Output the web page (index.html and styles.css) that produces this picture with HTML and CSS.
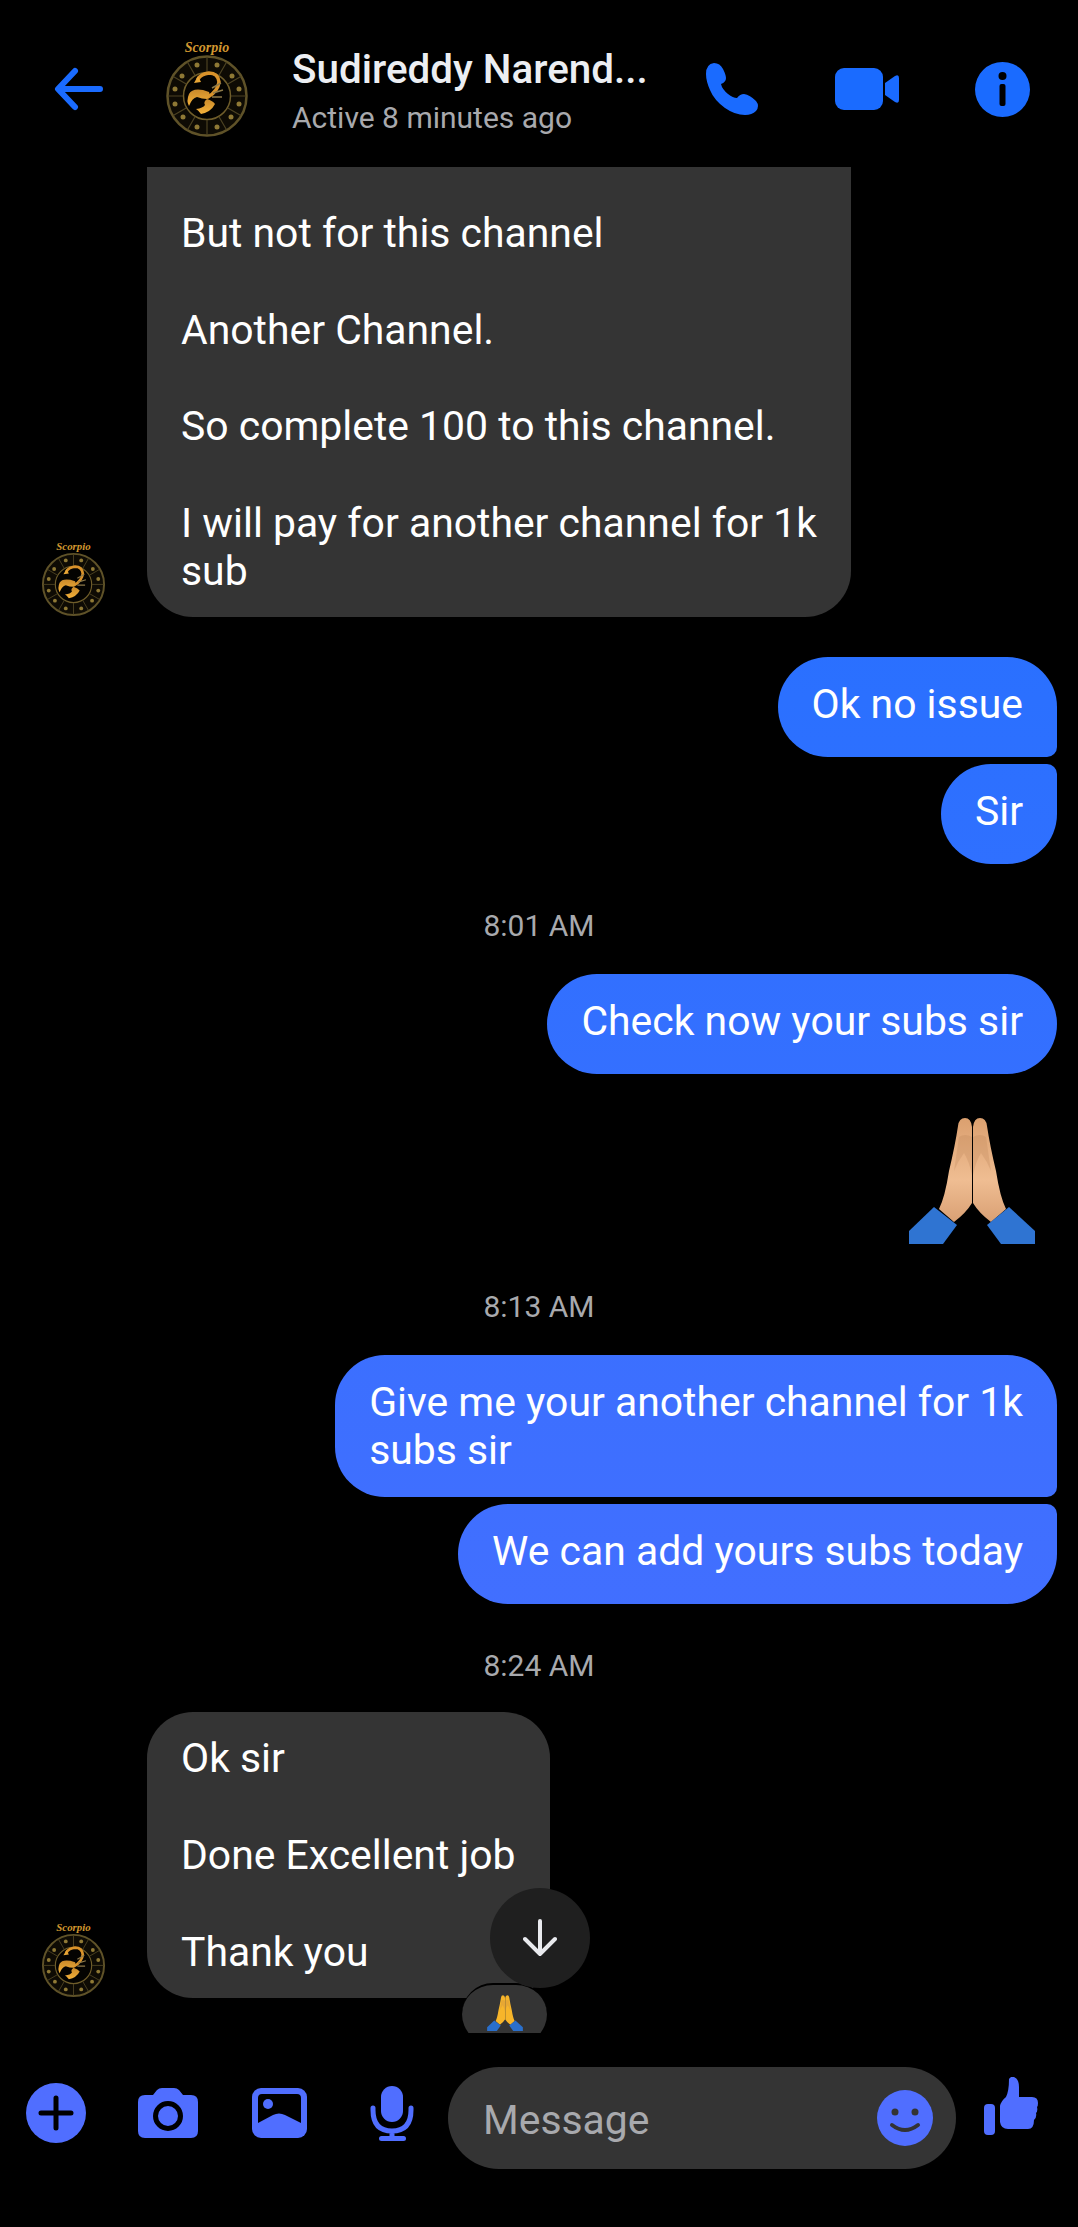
FILE: index.html
```html
<!DOCTYPE html>
<html lang="en">
<head>
  <meta charset="UTF-8" />
  <meta name="viewport" content="width=device-width, initial-scale=1" />
  <title>Sudireddy Narendra</title>
  <link rel="stylesheet" href="styles.css">
</head>
<body>

  <svg class="sprite" aria-hidden="true">
    <defs>
      <linearGradient id="skin" x1="0" y1="0" x2="0" y2="1">
        <stop offset="0" stop-color="#dba06f" />
        <stop offset="0.6" stop-color="#efbd92" />
        <stop offset="1" stop-color="#d9a074" />
      </linearGradient>
      <linearGradient id="gold" x1="0" y1="0" x2="0" y2="1">
        <stop offset="0" stop-color="#c9892a" />
        <stop offset="1" stop-color="#f4b23a" />
      </linearGradient>

      <symbol id="hands" viewBox="29 26 126 127">
        <path d="M78 35Q79 27 85 27Q91 27 92 36L92 112Q86 122 74 131L59 118Q65 106 69 80Q75 55 78 35Z" />
        <path d="M107 35Q106 27 100 27Q94 27 93 36L93 112Q99 122 111 131L126 118Q120 106 116 80Q110 55 107 35Z" />
        <path class="fold" d="M79 46Q85 42 92 46L92 84Q89 70 84 62Q78 70 74 80Q77 60 79 46Z" />
        <path class="fold" d="M106 46Q100 42 93 46L93 84Q96 70 101 62Q107 70 111 80Q108 60 106 46Z" />
        <path class="sleeve" d="M29 140L54 116L77 134L63 153L29 153Z" />
        <path class="sleeve" d="M155 140L129 116L107 134L121 153L155 153Z" />
      </symbol>

      <symbol id="scorpio" viewBox="0 0 84 96">
        <text x="42" y="11" text-anchor="middle" class="avatar-name">Scorpio</text>
        <circle cx="42" cy="55" r="39.5" fill="#0e0b04" stroke="#5f5228" stroke-width="2.500" />
        <circle cx="42" cy="55" r="23.500" fill="#040301" stroke="#6f5d2a" stroke-width="1.500" />
        <path stroke="#4c4222" stroke-width="1.200" d="M42 16V31M42 79V94M3 55H18M66 55H81M22.500 21.200L30 34.200M54 75.800L61.500 88.800M8.200 35.500L21.200 43M62.800 67L75.800 74.500M61.500 21.200L54 34.200M30 75.800L22.500 88.800M75.800 35.500L62.800 43M21.200 67L8.200 74.500" />
        <g fill="#8f7935">
          <circle cx="32" cy="24" r="2.500" />
          <circle cx="52" cy="24" r="2.500" />
          <circle cx="67" cy="35" r="2.500" />
          <circle cx="74" cy="48" r="2.500" />
          <circle cx="74" cy="63" r="2.500" />
          <circle cx="66" cy="76" r="2.500" />
          <circle cx="52" cy="86" r="2.500" />
          <circle cx="32" cy="86" r="2.500" />
          <circle cx="18" cy="76" r="2.500" />
          <circle cx="10" cy="63" r="2.500" />
          <circle cx="10" cy="48" r="2.500" />
          <circle cx="17" cy="35" r="2.500" />
        </g>
        <path d="M43 56Q53 50 54 41Q53 32 44 32Q36 33 33 38" fill="none" stroke="#d9922a" stroke-width="3.500" stroke-linecap="round" />
        <path d="M33 35L29 42L36 41Z" fill="#e8a636" />
        <path d="M47 47L56 42M48 52L58 49M47 56L57 56" stroke="#8d7a4a" stroke-width="1.500" />
        <path d="M38 49Q27 47 24 53Q21 60 24 65Q27 57 32 56Q37 58 42 58Q46 55 44 51Z" fill="url(#gold)" />
        <path d="M42 58Q48 60 50 63Q46 71 36 73Q33 69 31 68Q38 67 40 64Q38 61 42 58Z" fill="url(#gold)" />
      </symbol>
    </defs>
  </svg>

  <div class="app">

    <header class="topbar">
      <svg class="back" viewBox="0 0 50 44" fill="none" stroke="#1a6bff" stroke-width="6" stroke-linecap="round" stroke-linejoin="round">
        <path d="M46 22H5M21 4L4 22L21 40" />
      </svg>
      <svg class="avatar-large"><use href="#scorpio" /></svg>
      <div class="contact">
        <div class="contact-name">Sudireddy Narend...</div>
        <div class="contact-status">Active 8 minutes ago</div>
      </div>
      <svg class="phone" viewBox="15 13 55 52" fill="#1a6bff">
        <path d="M16 24Q16 14 24 13Q30 13 33 19Q36 25 36 28Q36 32 31 34Q32 39 38 44Q43 48 47 48Q50 44 54 44Q60 45 66 51Q70 56 66 61Q62 65 55 65Q45 65 35 58Q24 50 20 40Q16 31 16 24Z" />
      </svg>
      <svg class="video" viewBox="0 0 64 42" fill="#1a6bff">
        <rect width="48" height="42" rx="9" />
        <path d="M50 15L60 8Q64 6 64 10V32Q64 36 60 34L50 27Z" />
      </svg>
      <svg class="info" viewBox="0 0 55 55">
        <circle cx="27.500" cy="27.500" r="27.500" fill="#1a6bff" />
        <circle cx="27.500" cy="14" r="4" fill="#000" />
        <rect x="24.500" y="22" width="6" height="22" rx="2" fill="#000" />
      </svg>
    </header>

    <main class="messages">

      <div class="row incoming">
        <svg class="avatar-small"><use href="#scorpio" /></svg>
        <div class="bubble bubble-in clipped">But not for this channel

Another Channel.

So complete 100 to this channel.

I will pay for another channel for 1k
sub</div>
      </div>

      <div class="group">
        <div class="bubble bubble-out first">Ok no issue</div>
        <div class="bubble bubble-out last">Sir</div>
      </div>

      <div class="time">8:01 AM</div>

      <div class="group">
        <div class="bubble bubble-out">Check now your subs sir</div>
        <svg class="big-emoji"><use href="#hands" /></svg>
      </div>

      <div class="time">8:13 AM</div>

      <div class="group">
        <div class="bubble bubble-out first">Give me your another channel for 1k
subs sir</div>
        <div class="bubble bubble-out last">We can add yours subs today</div>
      </div>

      <div class="time">8:24 AM</div>

      <div class="row incoming">
        <svg class="avatar-small"><use href="#scorpio" /></svg>
        <div class="bubble bubble-in has-reaction">Ok sir

Done Excellent job

Thank you<div class="reaction"><svg class="small-emoji"><use href="#hands" /></svg></div></div>
      </div>

      <button class="scroll-down">
        <svg viewBox="0 0 34 38" fill="none" stroke="#e9eaee" stroke-width="4" stroke-linecap="round" stroke-linejoin="round">
          <path d="M17 2V35M2 20L17 35L32 20" />
        </svg>
      </button>
    </main>

    <footer class="composer">
      <div class="tools">
        <svg class="tool-plus" viewBox="0 0 60 60">
          <circle cx="30" cy="30" r="30" />
          <path d="M30 15V45M15 30H45" stroke="#000" stroke-width="5" stroke-linecap="round" />
        </svg>
        <svg class="tool-camera" viewBox="0 0 60 50">
          <path d="M7 7H15L19 2Q21 0 24 0H36Q39 0 41 2L45 7H53Q60 7 60 14V43Q60 50 53 50H7Q0 50 0 43V14Q0 7 7 7Z" />
          <circle cx="30" cy="28" r="12.500" fill="none" stroke="#000" stroke-width="5" />
        </svg>
        <svg class="tool-image" viewBox="0 0 55 50">
          <rect width="55" height="50" rx="9" />
          <path d="M6 35V10Q6 6 10 6H45Q49 6 49 10V35L33 27Q27 24 21 27Z" fill="#000" />
          <circle cx="16" cy="16" r="5" />
        </svg>
        <svg class="tool-mic" viewBox="0 0 44 55">
          <rect x="11" width="22" height="36" rx="11" />
          <path d="M3 22V24Q3 45 22 45Q41 45 41 24V22M22 45V52" fill="none" stroke-width="5" stroke-linecap="round" />
          <rect x="9" y="50" width="27" height="5" rx="2.500" />
        </svg>
      </div>
      <div class="input">
        <span class="placeholder">Message</span>
        <svg class="smile" viewBox="0 0 56 56">
          <circle cx="28" cy="28" r="28" />
          <circle cx="18" cy="22" r="3.500" fill="#333" />
          <circle cx="38" cy="22" r="3.500" fill="#333" />
          <path d="M15 35Q28 45 41 35" fill="none" stroke="#333" stroke-width="4" stroke-linecap="round" />
        </svg>
      </div>
      <svg class="thumb" viewBox="0 0 54 58">
        <rect x="0" y="27" width="11" height="31" rx="4" />
        <path d="M25 2Q27 -1 30 0Q35 2 35 10V20H48Q54 20 54 26Q54 29 53 30Q54 34 52 36Q53 40 50 43Q50 52 44 52H24Q17 52 16 45V29Q17 24 22 20Q25 14 25 2Z" />
      </svg>
    </footer>

  </div>

</body>
</html>
```

FILE: styles.css
```css
body {
  margin: 0;
  background: #000;
  color: #fff;
  font-family: Roboto, sans-serif;
}

.sprite {
  display: block;
  width: 0;
  height: 0;
}

.app {
  width: 1078px;
  height: 2227px;
  display: flex;
  flex-direction: column;
  overflow: hidden;
}

/* top bar */
.topbar {
  height: 167px;
  box-sizing: border-box;
  padding: 11px 0 0 54px;
  display: flex;
  align-items: center;
  flex-shrink: 0;
}

.back {
  width: 50px;
  height: 44px;
}

.avatar-large {
  width: 84px;
  height: 96px;
  margin-left: 61px;
}

.avatar-name {
  font-family: "Liberation Serif", serif;
  font-style: italic;
  font-weight: bold;
  font-size: 14px;
  fill: #d2972f;
}

.contact {
  width: 413px;
  margin-left: 43px;
  margin-top: 6px;
}

.contact-name {
  font-size: 40.4px;
  font-weight: 500;
  line-height: 48px;
  color: #eceef2;
}

.contact-status {
  font-size: 30px;
  line-height: 40px;
  margin-top: 4px;
  color: #a8a9ad;
}

.phone {
  width: 55px;
  height: 52px;
}

.video {
  width: 64px;
  height: 42px;
  margin-left: 75px;
}

.info {
  width: 55px;
  height: 55px;
  margin-left: 76px;
}

/* messages */
.messages {
  position: relative;
  height: 1866px;
  flex-shrink: 0;
  box-sizing: border-box;
  padding: 0 21px 0 41px;
  overflow: hidden;
}

.row {
  display: flex;
  align-items: flex-end;
}

.avatar-small {
  width: 65px;
  height: 76px;
  margin-right: 41px;
  flex-shrink: 0;
}

.bubble {
  box-sizing: border-box;
  min-height: 100px;
  font-size: 40.9px;
  line-height: 48.3px;
  white-space: pre-line;
  padding: 23px 34px;
  border-radius: 50px;
}

.bubble-in {
  background: #343434;
  padding-top: 22px;
  padding-bottom: 22px;
  border-radius: 46px;
}

.bubble-in.clipped {
  padding-top: 42px;
  padding-bottom: 22px;
  border-radius: 0 0 46px 46px;
}

.has-reaction {
  position: relative;
}

.reaction {
  position: absolute;
  left: 315px;
  top: 271px;
  width: 85px;
  height: 62px;
  box-sizing: border-box;
  border-top: 2px solid #000;
  border-radius: 32px;
  background: #343434;
  display: flex;
  justify-content: center;
}

.small-emoji {
  width: 36px;
  height: 36px;
  margin-top: 10px;
  fill: #f7b52a;
  color: #2a6fcb;
}

.sleeve {
  fill: currentColor;
}

.fold {
  fill: #b97f52;
  opacity: 0.25;
}

.group {
  display: flex;
  flex-direction: column;
  align-items: flex-end;
  margin-top: 41px;
}

.row + .group {
  margin-top: 40px;
}

.bubble-out {
  line-height: 48px;
  background: linear-gradient(180deg, #1f6cff 0, #2b70ff 700px, #3f6fff 1500px, #4f6eff 2227px) fixed;
}

.first {
  border-bottom-right-radius: 10px;
}

.last {
  margin-top: 7px;
  border-top-right-radius: 10px;
}

.big-emoji {
  width: 126px;
  height: 127px;
  margin: 43px 22px 1px 0;
  fill: url(#skin);
  color: #2f74d2;
}

.time {
  height: 40px;
  line-height: 40px;
  margin: 42px 0 -13px -20px;
  text-align: center;
  font-size: 30px;
  color: #a8a9ad;
}

.time + .row {
  margin-top: 39px;
}

.scroll-down {
  position: absolute;
  left: 490px;
  top: 1721px;
  width: 100px;
  height: 100px;
  padding: 0;
  border: none;
  border-radius: 50%;
  background: #1f1f1f;
  display: flex;
  align-items: center;
  justify-content: center;
}

.scroll-down svg {
  width: 34px;
  height: 38px;
}

/* bottom composer */
.composer {
  flex: 1;
  padding: 34px 0 0 26px;
  display: flex;
  align-items: flex-start;
  fill: #506eff;
  stroke: none;
}

.tools {
  height: 60px;
  margin-top: 16px;
  display: flex;
  align-items: center;
  gap: 53px;
}

.tool-plus {
  width: 60px;
  height: 60px;
}

.tool-camera {
  width: 60px;
  height: 50px;
  margin-left: -1px;
}

.tool-image {
  width: 55px;
  height: 50px;
  margin-left: 1px;
}

.tool-mic {
  width: 44px;
  height: 55px;
  margin-left: 10px;
  stroke: #506eff;
}

.tool-mic rect {
  stroke: none;
}

.input {
  width: 508px;
  height: 102px;
  margin-left: 34px;
  box-sizing: border-box;
  padding: 0 23px 0 35px;
  border-radius: 51px;
  background: #343434;
  display: flex;
  align-items: center;
  justify-content: space-between;
}

.placeholder {
  padding-top: 3px;
  font-size: 40.9px;
  color: #a8a9ad;
}

.smile {
  width: 56px;
  height: 56px;
}

.thumb {
  width: 54px;
  height: 58px;
  margin: 10px 0 0 28px;
}
```
